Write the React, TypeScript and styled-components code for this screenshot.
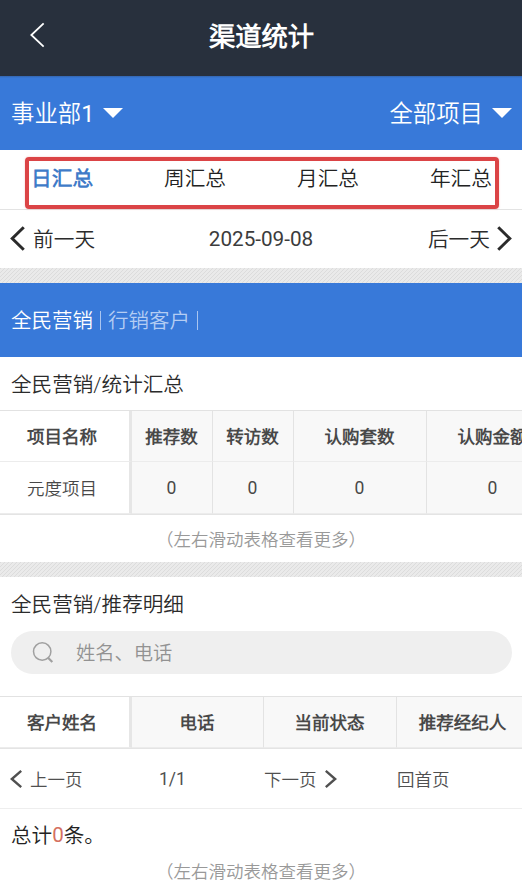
import React from "react";
import styled, { createGlobalStyle } from "styled-components";

const GlobalStyle = createGlobalStyle`
  * { box-sizing: border-box; }
  body {
    margin: 0;
    background: #fff;
    color: #333;
    font-family: Roboto, "Noto Sans CJK SC DemiLight", "Noto Sans CJK SC", sans-serif;
    font-weight: 350;
  }
`;

const Page = styled.div`
  width: 522px;
  height: 893px;
  overflow: hidden;
  background: #fff;
  display: flex;
  flex-direction: column;
  white-space: nowrap;
  > * { flex-shrink: 0; }
`;

const Header = styled.header`
  height: 76px;
  background: #28303d;
  color: #fff;
  display: grid;
  grid-template-columns: 77px 1fr 76px;
  align-items: center;
  padding-bottom: 4px;
`;

const BackButton = styled.button`
  border: 0;
  padding: 0 0 2px 30px;
  background: none;
  color: inherit;
  display: flex;
`;

const Title = styled.h1`
  margin: 0;
  padding-top: 1px;
  font-size: 26.3px;
  line-height: 38px;
  font-weight: 700;
  text-align: center;
`;

const FilterBar = styled.div`
  height: 74px;
  background: linear-gradient(#3564ac, #3879d9 2px);
  color: #fff;
  font-size: 23.4px;
  display: flex;
  align-items: center;
  justify-content: space-between;
  padding: 0 10px 2px 11px;
`;

const Filter = styled.div`
  display: flex;
  align-items: center;
  gap: 9px;
`;

const Caret = styled.i`
  margin-top: 1px;
  border: solid transparent;
  border-width: 10px 10px 0;
  border-top-color: #fff;
`;

const Tabs = styled.nav`
  position: relative;
  height: 60px;
  border-bottom: 1px solid #e3e3e3;
  display: flex;
  justify-content: space-between;
  align-items: center;
  padding: 0 30px 2px 31px;
`;

const Tab = styled.span<{ $active?: boolean }>`
  font-size: 20.7px;
  line-height: 30px;
  font-weight: ${(p) => (p.$active ? 700 : 350)};
  color: ${(p) => (p.$active ? "#3f7bc8" : "#222")};
`;

const Highlight = styled.div`
  position: absolute;
  left: 25px;
  top: 7px;
  width: 474px;
  height: 52px;
  border: 4px solid #db4446;
  border-radius: 4px;
  box-shadow: 0 0 2px rgba(219, 68, 70, 0.35);
`;

const DateBar = styled.div`
  height: 58px;
  display: grid;
  grid-template-columns: 1fr auto 1fr;
  align-items: center;
  padding: 0 10px 2px;
  font-size: 20.7px;
  color: #2b2b2b;
`;

const DateValue = styled.span`
  padding-top: 1px;
  font-weight: 400;
  color: #3c3c3c;
`;

const Step = styled.span<{ $end?: boolean }>`
  display: flex;
  align-items: center;
  gap: ${(p) => (p.$end ? "6px" : "7px")};
  justify-content: ${(p) => (p.$end ? "flex-end" : "flex-start")};
`;

const Stripe = styled.div`
  height: 15px;
  background: repeating-linear-gradient(135deg, #dcdcdc 0 1.2px, #eaeaea 1.2px 2.83px);
`;

const SourceBar = styled.div`
  height: 74px;
  background: #3879d9;
  color: #fff;
  font-size: 20.5px;
  display: flex;
  align-items: center;
  padding: 0 11px 2px;
`;

const Source = styled.span<{ $active?: boolean }>`
  color: ${(p) => (p.$active ? "#fff" : "#b4cdf3")};
`;

const Divider = styled.span`
  width: 1px;
  height: 19px;
  margin: 3px 7px 0 7px;
  background: #a9c5f0;
`;

const SectionTitle = styled.h2<{ $height: number }>`
  margin: 0;
  height: ${(p) => p.$height}px;
  padding: 0 0 2px 11px;
  display: flex;
  align-items: center;
  font-size: 20.6px;
  font-weight: 350;
  color: #2b2b2b;
`;

const Table = styled.div<{ $cols: string; $rows: string }>`
  width: 522px;
  overflow: hidden;
  display: grid;
  grid-template-columns: ${(p) => p.$cols};
  grid-template-rows: ${(p) => p.$rows};
  border-top: 1px solid #e2e2e2;
  border-bottom: 1px solid #e4e4e4;
  font-size: 17.5px;
  color: #484848;
`;

const Cell = styled.div<{ $first?: boolean; $head?: boolean }>`
  display: flex;
  align-items: center;
  justify-content: center;
  background: ${(p) => (p.$first ? "#fff" : "#f8f8f8")};
  border-right: ${(p) => (p.$first ? "3px solid #e6e6e6" : "1px solid #e3e3e3")};
  border-bottom: 1px solid #ececec;
  padding-right: ${(p) => (p.$first ? "5px" : "1px")};
  padding-bottom: ${(p) => (p.$head ? "1px" : "0")};
  font-weight: ${(p) => (p.$head ? 700 : 350)};
`;

const Num = styled.span`
  font-weight: 400;
`;

const Hint = styled.p<{ $height: number }>`
  margin: 0;
  height: ${(p) => p.$height}px;
  padding-bottom: 1px;
  display: flex;
  align-items: center;
  justify-content: center;
  font-size: 17.5px;
  color: #999;
`;

const Search = styled.label`
  height: 43px;
  margin: 0 10px 22px 11px;
  padding: 0 0 2px 21px;
  border-radius: 22px;
  background: #efefef;
  display: flex;
  align-items: center;
  gap: 22px;
  font-size: 19.3px;
  color: #929292;
`;

const Pager = styled.div`
  height: 60px;
  border-bottom: 1px solid #eee;
  display: grid;
  grid-template-columns: 149px 105px 133px 1fr;
  align-items: center;
  padding: 0 10px;
  font-size: 17.5px;
  color: #505050;
`;

const Total = styled.p`
  margin: 0;
  height: 52px;
  padding: 0 0 2px 11px;
  display: flex;
  align-items: center;
  font-size: 20.6px;
  color: #222;
`;

const Count = styled(Num)`
  padding-top: 1px;
  color: #d5705f;
`;

type ChevronProps = { w: number; h: number; stroke: number; right?: boolean };

const Chevron = ({ w, h, stroke, right }: ChevronProps) => {
  const near = stroke * 0.75;
  const points = right
    ? `${near},${near} ${w - near},${h / 2} ${near},${h - near}`
    : `${w - near},${near} ${near},${h / 2} ${w - near},${h - near}`;
  return (
    <svg width={w} height={h} viewBox={`0 0 ${w} ${h}`} fill="none">
      <polyline points={points} stroke="currentColor" strokeWidth={stroke} />
    </svg>
  );
};

const SearchIcon = () => (
  <svg width="22" height="22" viewBox="0 0 22 22" fill="none" stroke="#a0a0a0">
    <circle cx="10.2" cy="10.5" r="8.7" strokeWidth="1.5" />
    <path d="M16 16.7 20.3 21" strokeWidth="2.2" />
  </svg>
);

const summaryHead = ["项目名称", "推荐数", "转访数", "认购套数", "认购金额"];
const summaryRow = ["元度项目", "0", "0", "0", "0"];
const detailHead = ["客户姓名", "电话", "当前状态", "推荐经纪人"];

export default function App() {
  return (
    <>
      <GlobalStyle />
      <Page>
        <Header>
          <BackButton aria-label="返回">
            <Chevron w={15} h={26} stroke={1.8} />
          </BackButton>
          <Title>渠道统计</Title>
        </Header>
        <FilterBar>
          <Filter><span>事业部<Num>1</Num></span><Caret /></Filter>
          <Filter>全部项目<Caret /></Filter>
        </FilterBar>
        <Tabs>
          <Tab $active>日汇总</Tab>
          <Tab>周汇总</Tab>
          <Tab>月汇总</Tab>
          <Tab>年汇总</Tab>
          <Highlight />
        </Tabs>
        <DateBar>
          <Step><Chevron w={16} h={27} stroke={3} />前一天</Step>
          <DateValue>2025-09-08</DateValue>
          <Step $end>后一天<Chevron w={16} h={27} stroke={3} right /></Step>
        </DateBar>
        <Stripe />
        <SourceBar>
          <Source $active>全民营销</Source>
          <Divider />
          <Source>行销客户</Source>
          <Divider />
        </SourceBar>
        <SectionTitle $height={53}>全民营销/统计汇总</SectionTitle>
        <Table $cols="132px 81px 81px 133px 133px" $rows="51px 52px">
          {summaryHead.map((t, i) => (
            <Cell key={i} $first={i === 0} $head>{t}</Cell>
          ))}
          {summaryRow.map((t, i) => (
            <Cell key={i} $first={i === 0}>{i === 0 ? t : <Num>{t}</Num>}</Cell>
          ))}
        </Table>
        <Hint $height={47}>（左右滑动表格查看更多）</Hint>
        <Stripe />
        <SectionTitle $height={54}>全民营销/推荐明细</SectionTitle>
        <Search>
          <SearchIcon />
          姓名、电话
        </Search>
        <Table $cols="132px 132px 133px 133px" $rows="51px">
          {detailHead.map((t, i) => (
            <Cell key={i} $first={i === 0} $head>{t}</Cell>
          ))}
        </Table>
        <Pager>
          <Step><Chevron w={13} h={20} stroke={2.4} />上一页</Step>
          <Num>1/1</Num>
          <Step>下一页<Chevron w={13} h={20} stroke={2.4} right /></Step>
          <span>回首页</span>
        </Pager>
        <Total><span>总计</span><Count>0</Count><span>条。</span></Total>
        <Hint $height={20}>（左右滑动表格查看更多）</Hint>
      </Page>
    </>
  );
}
